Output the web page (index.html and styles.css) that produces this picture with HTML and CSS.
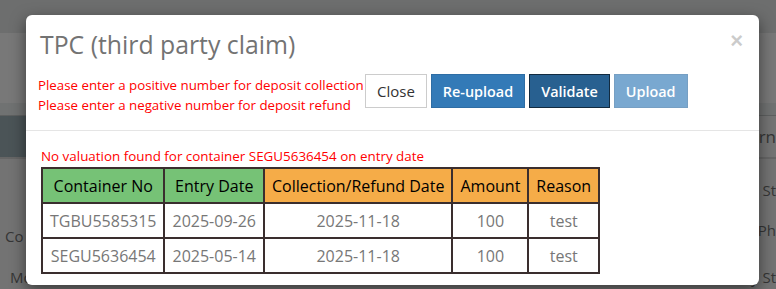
FILE: index.html
```html
<!DOCTYPE html>
<html lang="en">
<head>
    <meta charset="UTF-8">
    <meta name="viewport" content="width=device-width, initial-scale=1.0">
    <title>TPC (third party claim)</title>
    <link rel="stylesheet" href="styles.css">
</head>
<body>
    <div class="page">
        <div class="topbar"></div>
        <div class="panel"></div>
        <div class="strip"></div>
        <div class="grid-head">
            <div class="grid-head-left"></div>
            <span class="bg-text">rn</span>
        </div>
        <div class="bg-row row-1"><span></span><span class="bg-text">St</span></div>
        <div class="bg-row row-2"><span class="bg-text">Co</span><span class="bg-text">Ph</span></div>
        <div class="bg-row row-3"><span class="bg-text">Mo</span><span class="bg-text">y St</span></div>
    </div>

    <div class="modal">
        <div class="modal-header">
            <button class="close" type="button">&times;</button>
            <h4 class="modal-title">TPC (third party claim)</h4>
            <div class="header-row">
                <div class="hints">
                    <div>Please enter a positive number for deposit collection</div>
                    <div>Please enter a negative number for deposit refund</div>
                </div>
                <div class="actions">
                    <button class="btn btn-default">Close</button>
                    <button class="btn btn-primary">Re-upload</button>
                    <button class="btn btn-primary active">Validate</button>
                    <button class="btn btn-primary" disabled>Upload</button>
                </div>
            </div>
        </div>
        <div class="modal-body">
            <div class="error">No valuation found for container SEGU5636454 on entry date</div>
            <table class="claim-table">
                <thead>
                    <tr>
                        <th class="green">Container No</th>
                        <th class="green">Entry Date</th>
                        <th class="orange">Collection/Refund Date</th>
                        <th class="orange">Amount</th>
                        <th class="orange">Reason</th>
                    </tr>
                </thead>
                <tbody>
                    <tr>
                        <td>TGBU5585315</td>
                        <td>2025-09-26</td>
                        <td>2025-11-18</td>
                        <td>100</td>
                        <td>test</td>
                    </tr>
                    <tr>
                        <td>SEGU5636454</td>
                        <td>2025-05-14</td>
                        <td>2025-11-18</td>
                        <td>100</td>
                        <td>test</td>
                    </tr>
                </tbody>
            </table>
        </div>
    </div>
</body>
</html>
```

FILE: styles.css
```css
body {
    margin: 0;
    font-family: "Open Sans", "Liberation Sans", sans-serif;
    background-color: #737373;
    overflow: hidden;
}

/* dimmed page behind the modal */
.page {
    height: 289px;
    color: #363636;
    font-size: 15px;
}
.topbar {
    height: 33px;
    background-color: #6d6e6e;
}
.panel {
    height: 70px;
    background-color: #787878;
}
.strip {
    height: 12px;
    background-color: #707272;
    border-bottom: 1px solid #5e6060;
}
.grid-head {
    height: 41px;
    display: flex;
    justify-content: space-between;
    align-items: center;
    border-bottom: 2px solid #666;
    background-color: #747474;
    font-size: 17px;
}
.grid-head-left {
    width: 26px;
    height: 100%;
    background-color: #4b5457;
}
.bg-row {
    height: 40px;
    display: flex;
    justify-content: space-between;
    align-items: center;
}
.row-1 { margin-top: 11px; }
.row-2 .bg-text:first-child { margin-left: 5px; padding-top: 12px; }
.row-3 { margin-top: 7px; }
.row-3 .bg-text:first-child { margin-left: 10px; }

/* modal */
.modal {
    position: absolute;
    left: 26px;
    top: 15px;
    width: 733px;
    height: 270px;
    box-sizing: border-box;
    background-color: #fff;
    border-radius: 6px;
    box-shadow: 0 5px 15px rgba(0, 0, 0, 0.5);
}
.modal-header {
    position: relative;
    padding: 15px 15px 15px 12px;
    border-bottom: 1px solid #e5e5e5;
}
.close {
    position: absolute;
    right: 16px;
    top: 15px;
    padding: 0;
    border: none;
    background: none;
    font-family: "Liberation Sans", sans-serif;
    font-size: 22px;
    font-weight: bold;
    line-height: 1;
    color: #000;
    opacity: 0.2;
}
.modal-title {
    margin: 0 0 16px 2px;
    font-size: 24.8px;
    font-weight: normal;
    line-height: 29px;
    color: #737373;
}
.header-row {
    display: flex;
    align-items: flex-start;
}
.hints {
    width: 327px;
    white-space: nowrap;
    overflow: hidden;
    color: #f00;
    font-size: 13.3px;
    line-height: 20px;
}
.actions {
    display: flex;
    gap: 4px;
    margin-top: -1px;
}
.btn {
    height: 34px;
    padding: 0 11px;
    border: 1px solid transparent;
    border-radius: 0;
    font-family: inherit;
    font-size: 15px;
    cursor: pointer;
}
.btn-default {
    background-color: #fff;
    border-color: #ccc;
    color: #333;
}
.btn-primary {
    padding: 0 11px;
    background-color: #337ab7;
    border-color: #2e6da4;
    color: #fff;
    font-size: 14.4px;
    font-weight: 600;
}
.btn-primary.active {
    background-color: #286090;
    border-color: #122b40;
}
.btn-primary:disabled {
    opacity: 0.65;
    cursor: not-allowed;
}

.modal-body {
    padding: 15px 15px 14px 15px;
}
.error {
    color: #f00;
    font-size: 13.4px;
    line-height: 20px;
    margin-bottom: 1px;
}
.claim-table {
    border-collapse: collapse;
    font-size: 16px;
}
.claim-table th,
.claim-table td {
    height: 33px;
    padding: 0 7px;
    border: 2px solid #3a2e2e;
    text-align: center;
    white-space: nowrap;
}
.claim-table th {
    font-weight: normal;
    color: #000;
}
.claim-table td {
    color: #777;
}
.claim-table .green {
    background-color: #76c276;
}
.claim-table .orange {
    background-color: #f5ac48;
}
```
